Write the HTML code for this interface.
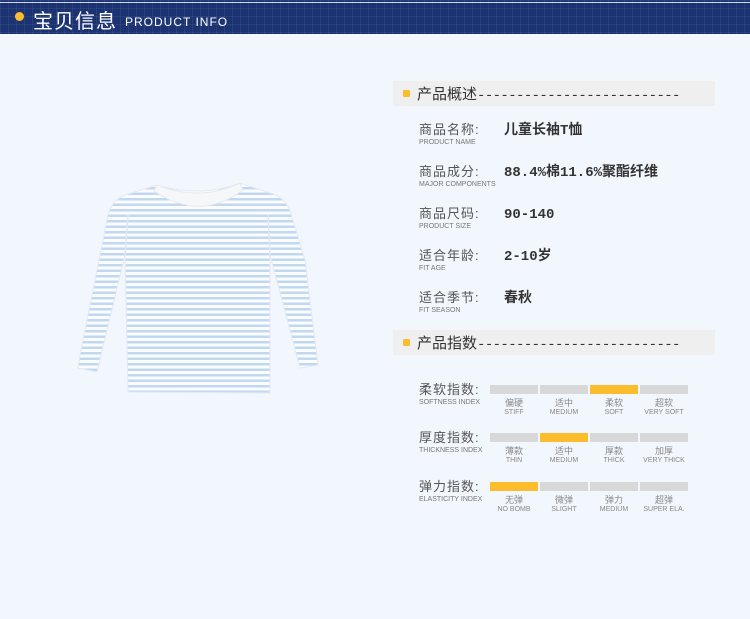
<!DOCTYPE html>
<html><head><meta charset="utf-8"><style>
body{margin:0;width:750px;height:619px;background:#f2f6fd;font-family:"Liberation Sans","Noto Sans CJK SC",sans-serif;position:relative;overflow:hidden}
.hd{position:absolute;left:0;top:0;width:750px;height:34px;background:#1b3372;
background-image:linear-gradient(rgba(255,255,255,.06) 1px,transparent 1px),linear-gradient(90deg,rgba(255,255,255,.06) 1px,transparent 1px);background-size:8px 8px}
.hd .ln{position:absolute;left:0;top:2px;width:750px;height:1px;background:#fff;opacity:.8}
.dot{position:absolute;left:15px;top:12px;width:9px;height:9px;border-radius:50%;background:#fbbd2c}
.t1{position:absolute;left:33px;top:5px;color:#fff;font-size:20px;letter-spacing:1px}
.t2{position:absolute;left:125px;top:15px;color:#fff;font-size:12px;letter-spacing:1px}
.bar{position:absolute;left:393px;width:322px;height:25px;background:#efefef}
.bar i{position:absolute;left:10px;top:9px;width:7px;height:7px;background:#fbbd2c;border-radius:1px}
.bar span{position:absolute;left:24px;top:2px;font-size:15px;color:#333;white-space:nowrap}
.bar span b{font-weight:normal;font-family:"Liberation Mono",monospace;font-size:14px;letter-spacing:-0.6px}
.lb{position:absolute;left:419px;font-size:13px;color:#555;letter-spacing:1px;line-height:16px}
.lb small{display:block;font-size:7px;color:#777;letter-spacing:0;line-height:9px}
.v{position:absolute;left:504px;font-size:14px;color:#333;font-weight:bold;font-family:"Liberation Mono","Noto Sans CJK SC",monospace;line-height:16px}
.il{position:absolute;left:419px;font-size:13px;color:#555;letter-spacing:1px;line-height:16px}
.il small{display:block;font-size:7px;color:#777;letter-spacing:0;line-height:9px}
.b{position:absolute;width:48px;height:9px;background:#d8d8d8}
.b.y{background:#fbbd2c}
.c{position:absolute;width:48px;text-align:center;font-size:9px;color:#888;line-height:10px}
.c small{display:block;font-size:7px}
</style></head><body>
<div class="hd"><div class="ln"></div><div class="dot"></div><div class="t1">宝贝信息</div><div class="t2">PRODUCT INFO</div></div>

<svg style="position:absolute;left:0;top:0" width="400" height="619">
<defs><pattern id="st" width="10" height="5.5" patternUnits="userSpaceOnUse"><rect width="10" height="5.5" fill="#fbfcfe"/><rect y="0" width="10" height="2.5" fill="#c2d7f0"/></pattern></defs>
<path d="M157,185 L125,195 Q112,200 108,215 L80,355 L78,368 L97,372 L125,255 L128,392 L270,393 L270,255 L300,368 L318,365 L305,260 L290,210 Q283,196 270,193 L240,183 Q200,198 157,185 Z" fill="url(#st)" stroke="#e3eaf4" stroke-width="1"/>
<path d="M125,255 L128,215 M270,255 L268,215" stroke="#dfe8f4" stroke-width="1.5" fill="none"/>
<path d="M157,185 Q200,202 240,183 L243,190 Q200,222 154,191 Z" fill="#f6f7f8" stroke="#e6e9ee"/>
</svg>

<div class="bar" style="top:81px"><i></i><span>产品概述<b>--------------------------</b></span></div>
<div class="lb" style="top:122px">商品名称:<small>PRODUCT NAME</small></div><div class="v" style="top:123px">儿童长袖T恤</div>
<div class="lb" style="top:164px">商品成分:<small>MAJOR COMPONENTS</small></div><div class="v" style="top:165px">88.4%棉11.6%聚酯纤维</div>
<div class="lb" style="top:206px">商品尺码:<small>PRODUCT SIZE</small></div><div class="v" style="top:207px">90-140</div>
<div class="lb" style="top:248px">适合年龄:<small>FIT AGE</small></div><div class="v" style="top:249px">2-10岁</div>
<div class="lb" style="top:290px">适合季节:<small>FIT SEASON</small></div><div class="v" style="top:291px">春秋</div>
<div class="bar" style="top:330px"><i></i><span>产品指数<b>--------------------------</b></span></div>

<div class="il" style="top:382px">柔软指数:<small>SOFTNESS INDEX</small></div>
<div class="b" style="left:490px;top:385px"></div><div class="b" style="left:540px;top:385px"></div><div class="b y" style="left:590px;top:385px"></div><div class="b" style="left:640px;top:385px"></div>
<div class="c" style="left:490px;top:398px">偏硬<small>STIFF</small></div><div class="c" style="left:540px;top:398px">适中<small>MEDIUM</small></div><div class="c" style="left:590px;top:398px">柔软<small>SOFT</small></div><div class="c" style="left:640px;top:398px">超软<small>VERY SOFT</small></div>

<div class="il" style="top:430px">厚度指数:<small>THICKNESS INDEX</small></div>
<div class="b" style="left:490px;top:433px"></div><div class="b y" style="left:540px;top:433px"></div><div class="b" style="left:590px;top:433px"></div><div class="b" style="left:640px;top:433px"></div>
<div class="c" style="left:490px;top:446px">薄款<small>THIN</small></div><div class="c" style="left:540px;top:446px">适中<small>MEDIUM</small></div><div class="c" style="left:590px;top:446px">厚款<small>THICK</small></div><div class="c" style="left:640px;top:446px">加厚<small>VERY THICK</small></div>

<div class="il" style="top:479px">弹力指数:<small>ELASTICITY INDEX</small></div>
<div class="b y" style="left:490px;top:482px"></div><div class="b" style="left:540px;top:482px"></div><div class="b" style="left:590px;top:482px"></div><div class="b" style="left:640px;top:482px"></div>
<div class="c" style="left:490px;top:495px">无弹<small>NO BOMB</small></div><div class="c" style="left:540px;top:495px">微弹<small>SLIGHT</small></div><div class="c" style="left:590px;top:495px">弹力<small>MEDIUM</small></div><div class="c" style="left:640px;top:495px">超弹<small>SUPER ELA.</small></div>
</body></html>
